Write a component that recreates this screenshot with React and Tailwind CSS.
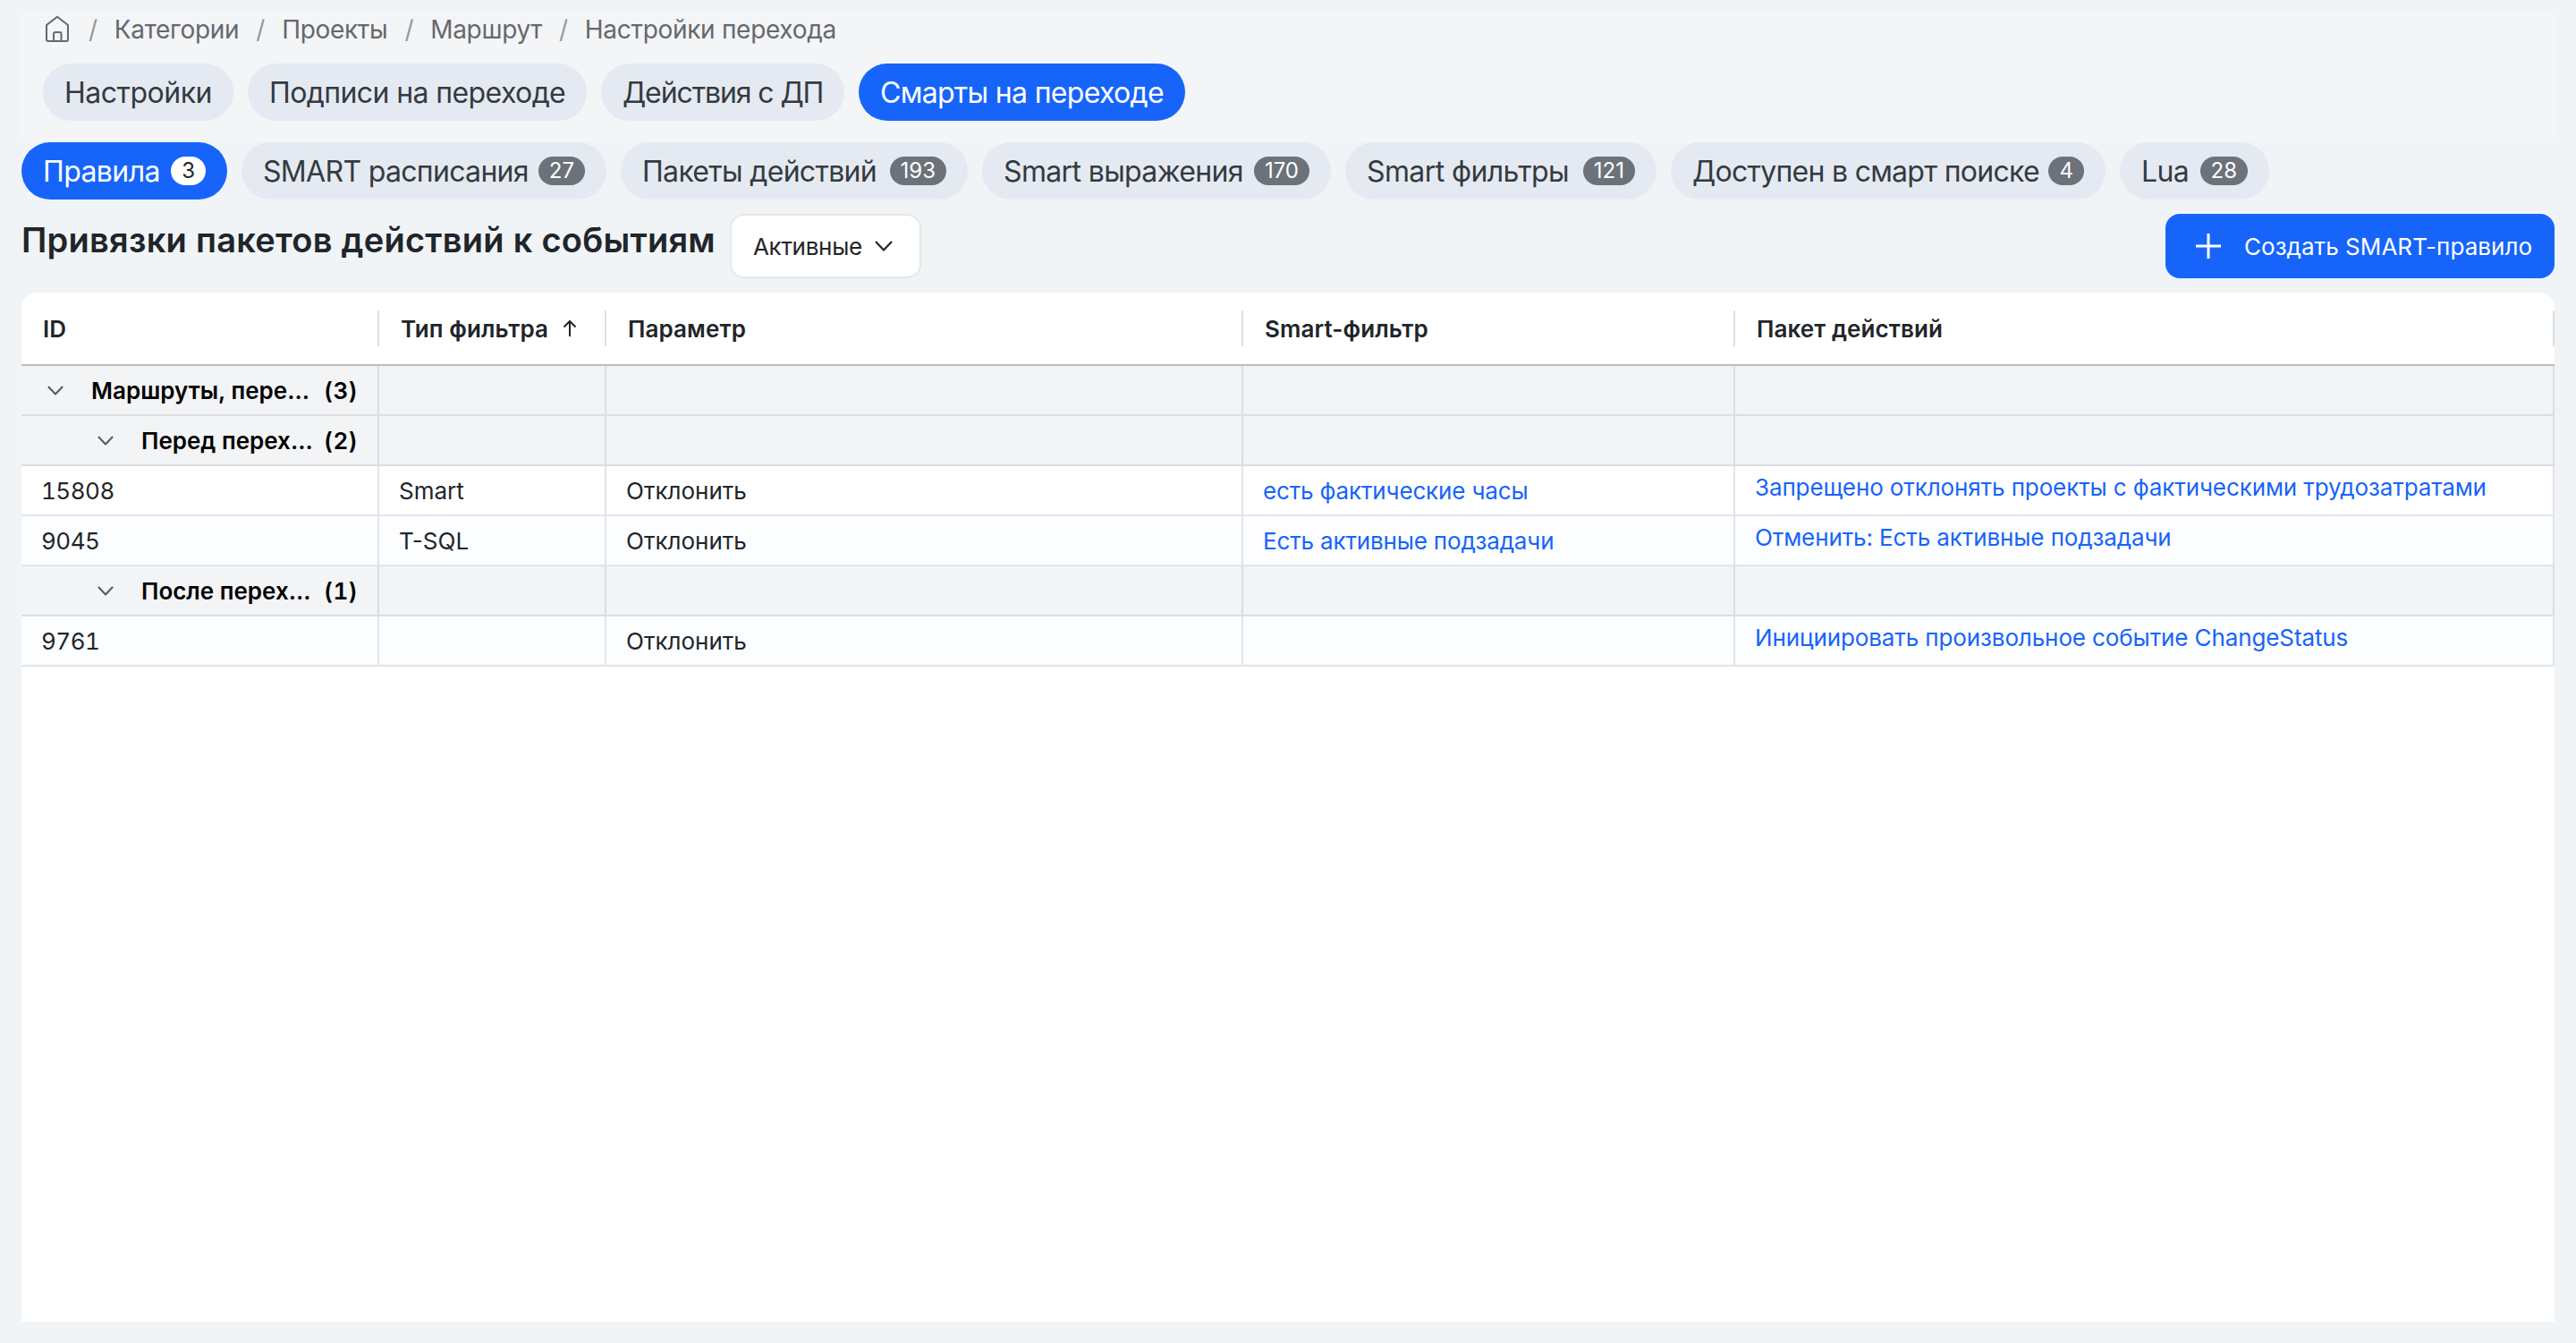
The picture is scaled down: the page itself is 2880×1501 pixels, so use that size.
const crumbs = ['Категории', 'Проекты', 'Маршрут', 'Настройки перехода'];

const sections = [
  { label: 'Настройки', size: 'w-[213px] tracking-[-0.5px]' },
  { label: 'Подписи на переходе', size: 'w-[379px] tracking-[-0.6px]' },
  { label: 'Действия с ДП', size: 'w-[272px] tracking-[-1.1px]' },
  { label: 'Смарты на переходе', size: 'w-[365px] tracking-[-0.68px]', active: true },
];

const tabs = [
  { label: 'Правила', count: 3, size: 'w-[230px] tracking-[-0.6px]', active: true },
  { label: 'SMART расписания', count: 27, size: 'w-[408px] tracking-[-0.68px]' },
  { label: 'Пакеты действий', count: 193, size: 'w-[388px] tracking-[-0.68px]' },
  { label: 'Smart выражения', count: 170, size: 'w-[390px] tracking-[-0.64px]' },
  { label: 'Smart фильтры', count: 121, size: 'w-[348px] tracking-[-0.6px]' },
  { label: 'Доступен в смарт поиске', count: 4, size: 'w-[486px] tracking-[-0.72px]' },
  { label: 'Lua', count: 28, size: 'w-[167px] tracking-[-0.64px]' },
];

const columns = ['ID', 'Тип фильтра', 'Параметр', 'Smart-фильтр', 'Пакет действий'];

const rows = [
  { group: 'Маршруты, пере...', count: 3, level: 0 },
  { group: 'Перед перех...', count: 2, level: 1 },
  { id: '15808', type: 'Smart', param: 'Отклонить', filter: 'есть фактические часы', pack: 'Запрещено отклонять проекты с фактическими трудозатратами' },
  { id: '9045', type: 'T-SQL', param: 'Отклонить', filter: 'Есть активные подзадачи', pack: 'Отменить: Есть активные подзадачи', odd: true },
  { group: 'После перех...', count: 1, level: 1 },
  { id: '9761', type: '', param: 'Отклонить', filter: '', pack: 'Инициировать произвольное событие ChangeStatus', odd: true },
];

const grid = 'grid grid-cols-[400px_254px_712px_550px_916px]';

function Chevron({ className }) {
  return (
    <svg viewBox="0 0 20 12" className={className} fill="none" stroke="currentColor" strokeWidth="2.2" strokeLinejoin="round">
      <path d="M1 1l9 9.500 9-9.500" />
    </svg>
  );
}

function Pill({ label, count, size, active }) {
  return (
    <button className={`flex h-16 shrink-0 items-center justify-between rounded-full px-6 text-[32px] whitespace-nowrap ${size} ${active ? 'bg-[#1764fa] text-white' : 'bg-[#e5eaf2] text-[#343a40]'}`}>
      <span className="pt-0.5">{label}</span>
      {count !== undefined && (
        <span className={`flex h-8 items-center rounded-full px-3 text-2xl tracking-normal ${active ? 'bg-white text-[#212529]' : 'bg-[#6c727a] text-white'}`}>
          {count}
        </span>
      )}
    </button>
  );
}

function Row({ row }) {
  const isGroup = row.group !== undefined;
  const line = isGroup ? 'border-[#dbdde0]' : 'border-[#e2e4e8]';
  const cell = `flex items-center border-r-2 pl-[22px] ${line}`;
  const bg = isGroup ? 'bg-[#f3f4f6]' : row.odd ? 'bg-[#fcfdff]' : 'bg-white';
  return (
    <div className={`${grid} h-14 border-b-2 text-[26px] ${line} ${bg}`}>
      {isGroup ? (
        <div className={`flex items-center border-r-2 pr-[22px] font-semibold text-black ${line} ${row.level ? 'pl-[85px]' : 'pl-[29px]'}`}>
          <Chevron className="h-[11px] w-[18px] text-[#55585c]" />
          <span className="ml-[31px] whitespace-nowrap">{row.group}</span>
          <span className="ml-auto tracking-[0.3px] tabular-nums">({row.count})</span>
        </div>
      ) : (
        <div className={`${cell} tracking-[-0.5px] text-[#212529] tabular-nums`}>{row.id}</div>
      )}
      <div className={`${cell} text-[#212529]`}>{row.type}</div>
      <div className={`${cell} text-[#212529]`}>{row.param}</div>
      <div className={`${cell} tracking-[-0.16px] text-[#1764fa]`}>{row.filter}</div>
      <div className={`${cell} pb-2 tracking-[-0.11px] whitespace-nowrap text-[#1764fa]`}>{row.pack}</div>
    </div>
  );
}

export default function App() {
  return (
    <div className="flex h-[1501px] w-[2880px] flex-col bg-[#f0f4f7] px-6 pt-3 pb-6 font-['Inter',sans-serif]">
      <header className="h-[147px] bg-[#f3f5f7] px-6">
        <nav className="flex h-[42px] items-center text-[28px] tracking-[-0.3px] text-[#65686c]">
          <svg viewBox="0 0 32 32" className="h-8 w-8" fill="none" stroke="currentColor" strokeWidth="2" strokeLinejoin="round">
            <path d="M4 11L16 1.800 28 11V27a2 2 0 0 1-2 2H6a2 2 0 0 1-2-2z" />
            <path d="M12 29V21a2 2 0 0 1 2-2h4.500a2 2 0 0 1 2 2V29" />
          </svg>
          {crumbs.map((c) => (
            <span key={c} className="flex">
              <span className="mx-[19px] text-[#96999d]">/</span>
              {c}
            </span>
          ))}
        </nav>
        <div className="mt-[17px] flex gap-4">
          {sections.map((s) => <Pill key={s.label} {...s} />)}
        </div>
      </header>

      <div className="flex gap-4">
        {tabs.map((t) => <Pill key={t.label} {...t} />)}
      </div>

      <div className="mt-4 flex h-[72px] items-start">
        <h1 className="text-[38px] leading-[58px] font-semibold tracking-[0.26px] whitespace-nowrap text-[#212529]">Привязки пакетов действий к событиям</h1>
        <button className="ml-4 flex h-[72px] w-[214px] items-center rounded-2xl border-2 border-[#e6e8e8] bg-white pl-6 text-[26px] tracking-[-0.3px] text-[#212529]">
          Активные
          <Chevron className="ml-[14px] h-3 w-5" />
        </button>
        <button className="ml-auto flex h-[72px] w-[435px] items-center rounded-2xl bg-[#1764fa] pl-[34px] text-[26px] tracking-[0.05px] whitespace-nowrap text-white">
          <svg viewBox="0 0 28 28" className="mr-[26px] h-7 w-7" fill="none" stroke="currentColor" strokeWidth="3">
            <path d="M14 0v28M0 14h28" />
          </svg>
          Создать SMART-правило
        </button>
      </div>

      <main className="mt-4 flex-1 overflow-hidden rounded-t-2xl bg-white">
        <div className={`${grid} h-[82px] items-center border-b-2 border-[#babdc0] text-[26px] font-semibold tracking-[0.1px] text-[#212529]`}>
          {columns.map((c) => (
            <div key={c} className="flex h-10 items-center border-r-2 border-[#dbdfe3] pl-6">
              {c}
              {c === 'Тип фильтра' && (
                <svg viewBox="0 0 16 20" className="ml-4 h-5 w-4" fill="none" stroke="currentColor" strokeWidth="2">
                  <path d="M8 19V2M1.500 8.500L8 2l6.500 6.500" />
                </svg>
              )}
            </div>
          ))}
        </div>
        {rows.map((r, i) => <Row key={i} row={r} />)}
      </main>
    </div>
  );
}
